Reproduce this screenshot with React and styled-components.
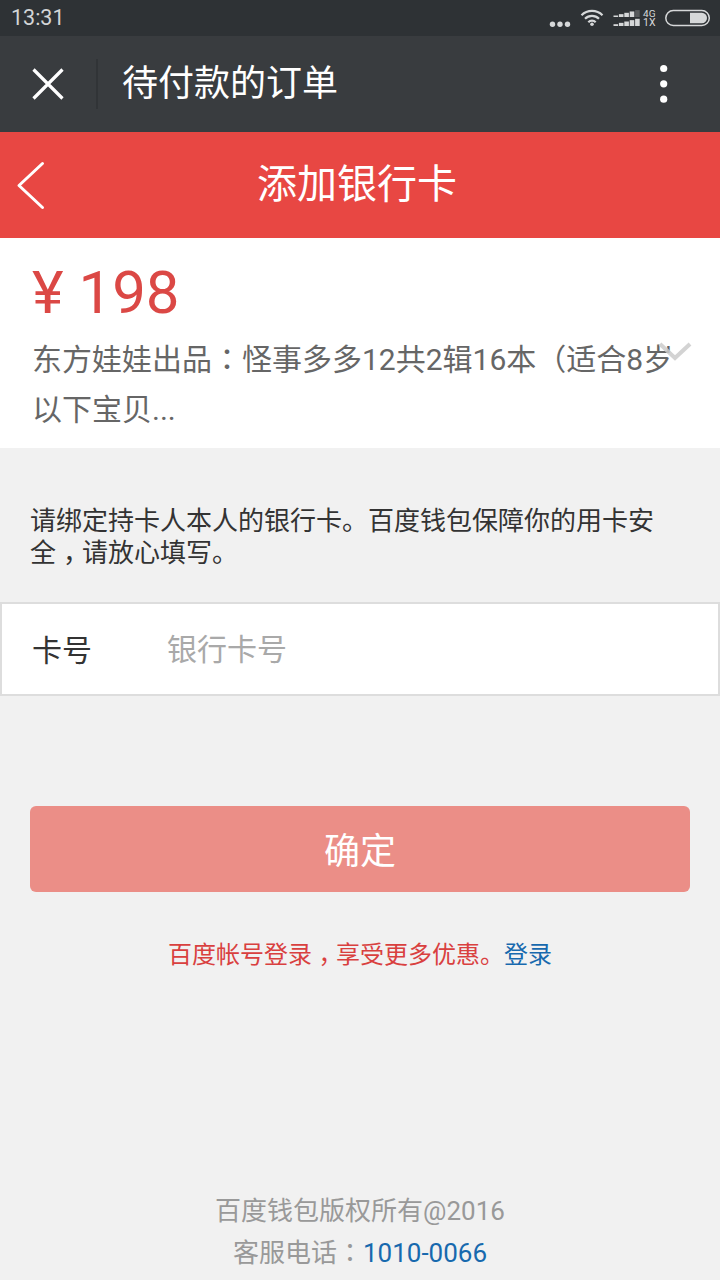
import React from 'react';
import styled, { createGlobalStyle } from 'styled-components';

const GlobalStyle = createGlobalStyle`
  * { box-sizing: border-box; }
  body {
    margin: 0;
    background: #f1f1f1;
    font-family: Roboto, "Noto Sans CJK SC", sans-serif;
  }
`;

const Screen = styled.div`
  display: flex;
  flex-direction: column;
  width: 720px;
  height: 1280px;
  overflow: hidden;
  background: #f1f1f1;
`;

const StatusBar = styled.div`
  display: flex;
  align-items: center;
  justify-content: space-between;
  flex: none;
  height: 36px;
  padding-left: 11px;
  background: #2e3235;
`;

const Clock = styled.span`
  font-size: 21.5px;
  line-height: 36px;
  color: #d3d5d6;
`;

const TitleBar = styled.header`
  display: flex;
  align-items: center;
  flex: none;
  height: 96px;
  padding: 0 50px 0 32px;
  background: #393c3f;
`;

const TitleDivider = styled.div`
  width: 2px;
  height: 50px;
  margin: 0 24px 0 32px;
  background: #313437;
`;

const WindowTitle = styled.h1`
  flex: 1;
  margin: 0;
  font-size: 36px;
  font-weight: 400;
  line-height: 96px;
  color: #fff;
`;

const PageHeader = styled.div`
  display: grid;
  grid-template-columns: 46px 1fr 46px;
  align-items: center;
  flex: none;
  height: 106px;
  padding: 0 0 1px;
  background: #e84743;
`;

const BackButton = styled.div`
  display: flex;
  padding-left: 16px;
`;

const PageTitle = styled.h2`
  margin: 0;
  padding-right: 6px;
  font-size: 40px;
  font-weight: 400;
  line-height: 60px;
  text-align: center;
  color: #fff;
`;

const OrderCard = styled.section`
  position: relative;
  flex: none;
  height: 210px;
  padding: 19px 20px 0 32px;
  background: #fff;
`;

const Price = styled.div`
  font-size: 60px;
  line-height: 72px;
  color: #db4845;
`;

const Description = styled.p`
  margin: 3px 0 0;
  font-size: 30px;
  line-height: 50px;
  color: #666;
`;

const ExpandIcon = styled.svg`
  position: absolute;
  top: 103px;
  left: 658px;
`;

const CenteredMark = styled.span`
  font-family: "Noto Sans CJK JP", sans-serif;
`;

const Comma = styled.span`
  padding-left: 0.27em;
  margin-right: -0.27em;
`;

const Notice = styled.p`
  flex: none;
  height: 154px;
  margin: 0;
  padding: 57px 30px 0;
  font-size: 26px;
  line-height: 32px;
  color: #333;
`;

const CardField = styled.label`
  display: flex;
  align-items: center;
  flex: none;
  height: 94px;
  padding: 0 30px;
  border: 2px solid #ddd;
  background: #fff;
`;

const FieldLabel = styled.span`
  width: 135px;
  padding-bottom: 3px;
  font-size: 30px;
  color: #333;
`;

const FieldInput = styled.input`
  flex: 1;
  height: 60px;
  padding: 0;
  border: 0;
  outline: 0;
  background: transparent;
  font: inherit;
  font-size: 30px;
  color: #333;
  &::placeholder { color: #a9a9a9; }
`;

const SubmitButton = styled.button`
  flex: none;
  height: 86px;
  margin: 110px 30px 0;
  padding: 0 0 3px;
  border: 0;
  border-radius: 6px;
  background: #eb8e87;
  font-family: inherit;
  font-size: 36px;
  color: #fff;
`;

const LoginHint = styled.p`
  margin: 45px 0 0;
  font-size: 24px;
  line-height: 36px;
  text-align: center;
  color: #d9403f;
`;

const Link = styled.a`
  color: #1769ae;
`;

const Footer = styled.footer`
  margin-top: auto;
  padding-bottom: 7px;
  font-size: 26px;
  line-height: 40px;
  text-align: center;
  color: #999;
`;

const signalBars = [0, 1, 2, 3, 4];

function StatusIcons() {
  return (
    <svg width="180" height="36" fill="#d6d8d9">
      <circle cx="12.5" cy="24.3" r="2.7" />
      <circle cx="20" cy="24.3" r="2.7" />
      <circle cx="27.5" cy="24.3" r="2.7" />
      <g fill="none" stroke="#d6d8d9" strokeWidth="2.2">
        <path d="M41.5 15.2a15 15 0 0 1 21 0" />
        <path d="M45 18.8a10 10 0 0 1 14 0" />
        <path d="M48.3 22.2a5.2 5.2 0 0 1 7.4 0" />
      </g>
      <circle cx="52" cy="24.2" r="1.8" />
      {signalBars.map((i) => (
        <g key={i}>
          <rect x={73.5 + i * 5.4} y={15.5 - i * 1.35} width="4.6" height={1.5 + i * 1.35} opacity={i === 4 ? 0.25 : 1} />
          <rect x={73.5 + i * 5.4} y={24.2 - i * 1.35} width="4.6" height={1.8 + i * 1.35} />
        </g>
      ))}
      <text x="103" y="17" fontSize="9" textLength="12.5" lengthAdjust="spacingAndGlyphs">4G</text>
      <text x="103" y="26" fontSize="10" textLength="12.5" lengthAdjust="spacingAndGlyphs">1X</text>
      <rect x="125.8" y="10.5" width="43.5" height="15" rx="7.5" fill="none" stroke="#d6d8d9" strokeWidth="1.5" />
      <path d="M150 12.8h11.8a5.2 5.2 0 0 1 0 10.4H150z" />
    </svg>
  );
}

export default function App() {
  return (
    <>
      <GlobalStyle />
      <Screen>
        <StatusBar>
          <Clock>13:31</Clock>
          <StatusIcons />
        </StatusBar>
        <TitleBar>
          <svg width="32" height="32" fill="none" stroke="#fff" strokeWidth="3.2">
            <path d="M1.5 1.5l29 29M30.5 1.5l-29 29" />
          </svg>
          <TitleDivider />
          <WindowTitle>待付款的订单</WindowTitle>
          <svg width="12" height="40" fill="#fff">
            <circle cx="5.7" cy="4.5" r="3.6" />
            <circle cx="5.7" cy="19.8" r="3.6" />
            <circle cx="5.7" cy="35.2" r="3.6" />
          </svg>
        </TitleBar>
        <PageHeader>
          <BackButton>
            <svg width="30" height="50" fill="none" stroke="#fff" strokeWidth="3" strokeLinecap="round" strokeLinejoin="round">
              <path d="M26.5 3.5L3 25.5l23.5 22" />
            </svg>
          </BackButton>
          <PageTitle>添加银行卡</PageTitle>
        </PageHeader>
        <OrderCard>
          <Price>¥ 198</Price>
          <Description>
            东方娃娃出品<CenteredMark>：</CenteredMark>怪事多多12共2辑16本（适合8岁以下宝贝...
          </Description>
          <ExpandIcon width="34" height="22" fill="none" stroke="#ccc" strokeWidth="4" opacity="0.85">
            <path d="M2 3l15 14L32 3" />
          </ExpandIcon>
        </OrderCard>
        <Notice>
          请绑定持卡人本人的银行卡。百度钱包保障你的用卡安全<Comma>，</Comma>请放心填写。
        </Notice>
        <CardField>
          <FieldLabel>卡号</FieldLabel>
          <FieldInput placeholder="银行卡号" />
        </CardField>
        <SubmitButton>确定</SubmitButton>
        <LoginHint>
          百度帐号登录<Comma>，</Comma>享受更多优惠。<Link>登录</Link>
        </LoginHint>
        <Footer>
          <div>百度钱包版权所有@2016</div>
          <div>客服电话<CenteredMark>：</CenteredMark><Link>1010-0066</Link></div>
        </Footer>
      </Screen>
    </>
  );
}
